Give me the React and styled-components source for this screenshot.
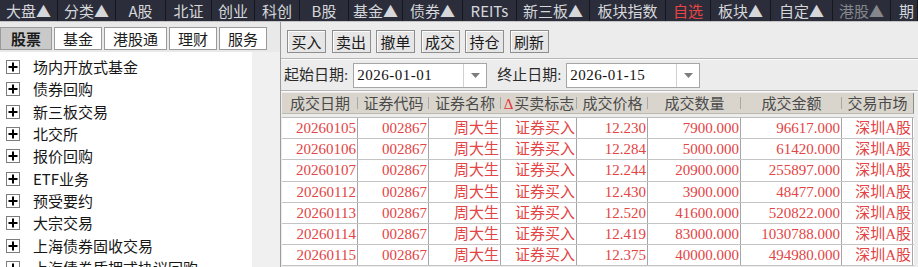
import React from 'react';
import styled, { createGlobalStyle } from 'styled-components';

const SANS = `"Noto Sans CJK SC", "Noto Sans", sans-serif`;
const SERIF = `"Liberation Serif", "Noto Sans CJK SC", serif`;

const GlobalStyle = createGlobalStyle`
  html, body { margin: 0; padding: 0; }
  body { background: #e9e9e9; font-family: ${SANS}; overflow: hidden; }
`;

const Screen = styled.div`
  width: 918px;
  height: 267px;
  display: flex;
  flex-direction: column;
  overflow: hidden;
  background: #e9e9e9;
`;

const TopBar = styled.div`
  display: flex;
  flex-shrink: 0;
  height: 21px;
  background: #2b2e3a;
  border-bottom: 1px solid #c4c4c4;
  overflow: hidden;
`;

const NavItem = styled.div`
  flex: ${p => (p.$w ? `0 0 ${p.$w}px` : '1 1 auto')};
  box-sizing: border-box;
  border-right: 1px solid #15171e;
  display: flex;
  align-items: center;
  justify-content: ${p => (p.$w ? 'center' : 'flex-start')};
  padding-left: ${p => (p.$w ? 0 : 8)}px;
  font: 15px/21px ${SANS};
  white-space: nowrap;
  color: ${p => (p.$tone === 'red' ? '#e84444' : p.$tone === 'dim' ? '#86878c' : '#d6d7da')};
`;

const Main = styled.div`
  flex: 1;
  display: flex;
  min-height: 0;
`;

const LeftPanel = styled.div`
  width: 280px;
  flex-shrink: 0;
  display: flex;
  flex-direction: column;
`;

const Tabs = styled.div`
  display: flex;
  gap: 2px;
  margin-top: 5px;
  height: 23px;
`;

const Tab = styled.div`
  box-sizing: border-box;
  height: 23px;
  padding: 0 ${p => (p.$active ? 10 : 8)}px;
  border: 1px solid #9a9a9a;
  background: ${p => (p.$active ? '#c9c9c9' : '#ffffff')};
  font: ${p => (p.$active ? 700 : 400)} 15px/21px ${SANS};
  color: #1c1c1c;
  white-space: nowrap;
`;

const TreeArea = styled.div`
  flex: 1;
  display: flex;
  margin-top: 2px;
  min-height: 0;
`;

const TreeList = styled.div`
  width: 252px;
  background: #ffffff;
  padding-top: 4px;
  overflow: hidden;
`;

const ScrollStrip = styled.div`
  flex: 1;
  background: #f0f0f0;
`;

const TreeRow = styled.div`
  height: 22.3px;
  display: flex;
  align-items: center;
  gap: 13px;
  padding-left: 6px;
`;

const TreeLabel = styled.span`
  font: 15px/20px ${SANS};
  color: #161616;
  white-space: nowrap;
`;

const RightPanel = styled.div`
  flex: 1;
  display: flex;
  flex-direction: column;
  border-left: 1px solid #9c9c9c;
  background: #ececec;
  min-width: 0;
`;

const Toolbar = styled.div`
  height: 36px;
  box-sizing: border-box;
  padding: 8px 0 0 6px;
  display: flex;
  align-items: flex-start;
  gap: 5.5px;
`;

const ToolButton = styled.div`
  width: 39px;
  height: 23px;
  box-sizing: border-box;
  border: 1px solid #8e8e8e;
  background: #e6e6e6;
  box-shadow: inset 1px 1px 0 #fdfdfd;
  font: 15px/21px ${SANS};
  color: #1a1a1a;
  text-align: center;
`;

const Etched = styled.div`
  border-top: 1px solid #b6b6b6;
  border-bottom: 1px solid #fafafa;
`;

const DateRow = styled.div`
  height: 30px;
  display: flex;
  align-items: center;
  gap: 10px;
  padding-left: 3px;
`;

const DateField = styled.div`
  display: flex;
  align-items: center;
  gap: 5px;
`;

const FieldLabel = styled.span`
  font: 15px/20px ${SERIF};
  color: #2a2a2a;
  white-space: nowrap;
`;

const Combo = styled.div`
  width: 134px;
  height: 25px;
  box-sizing: border-box;
  border: 1px solid #a6a6a6;
  background: #ffffff;
  display: flex;
`;

const ComboText = styled.div`
  flex: 1;
  padding-left: 3px;
  font: 15px/23px ${SERIF};
  letter-spacing: 0.5px;
  color: #111111;
`;

const ComboArrow = styled.div`
  width: 22px;
  border-left: 1px solid #d2d2d2;
  display: flex;
  align-items: center;
  justify-content: center;
`;

const Table = styled.div`
  margin: 1px 0 0 1px;
  width: max-content;
`;

const COLS = '76px 71px 72px 76px 71px 93px 101px 71px';

const HeaderRow = styled.div`
  display: grid;
  grid-template-columns: ${COLS};
  height: 20px;
  background: #d9d5cd;
  border-bottom: 1px solid #bdb9b1;
  border-right: 1px solid #8c8c8c;
`;

const HeaderCell = styled.div`
  position: relative;
  text-align: center;
  font: 15px/20px ${SANS};
  color: #4a4a4a;
  white-space: nowrap;
  overflow: hidden;
  &::after {
    content: '';
    display: ${p => (p.$last ? 'none' : 'block')};
    position: absolute;
    right: 0;
    top: 4px;
    bottom: 4px;
    width: 1px;
    background: #a8a8a8;
  }
`;

const SortMark = styled.span`
  font-family: ${SERIF};
  color: #e53535;
  margin-right: 1px;
`;

const Body = styled.div`
  margin-top: 3px;
  border-top: 1px solid #bdbdbd;
  background: #ffffff;
`;

const Row = styled.div`
  display: grid;
  grid-template-columns: ${COLS};
  height: 21.2px;
  box-sizing: border-box;
  border-bottom: 1px solid #c4c4c4;
`;

const Cell = styled.div`
  border-right: 1px solid #a6a6a6;
  text-align: right;
  padding-right: 1px;
  font: 15px/20px ${SERIF};
  color: #e34444;
  white-space: nowrap;
  overflow: hidden;
`;

const PlusBox = () => (
  <svg width="14" height="14" viewBox="0 0 14 14">
    <rect x="0.5" y="0.5" width="13" height="13" fill="#fff" stroke="#7c7c7c" />
    <path d="M7 2.5v9M2.5 7h9" stroke="#000" strokeWidth="2" />
  </svg>
);

const DownArrow = () => (
  <svg width="9" height="5" viewBox="0 0 9 5">
    <path d="M0 0h9L4.5 5z" fill="#7d7d7d" />
  </svg>
);

const nav = [
  { t: '大盘▲', w: 58 },
  { t: '分类▲', w: 58 },
  { t: 'A股', w: 50 },
  { t: '北证', w: 46 },
  { t: '创业', w: 43 },
  { t: '科创', w: 45 },
  { t: 'B股', w: 49 },
  { t: '基金▲', w: 54 },
  { t: '债券▲', w: 60 },
  { t: 'REITs', w: 54 },
  { t: '新三板▲', w: 73 },
  { t: '板块指数', w: 76 },
  { t: '自选', w: 45, tone: 'red' },
  { t: '板块▲', w: 60 },
  { t: '自定▲', w: 62 },
  { t: '港股▲', w: 58, tone: 'dim' },
  { t: '期' },
];

const tabs = ['股票', '基金', '港股通', '理财', '服务'];

const tree = [
  '场内开放式基金',
  '债券回购',
  '新三板交易',
  '北交所',
  '报价回购',
  'ETF业务',
  '预受要约',
  '大宗交易',
  '上海债券固收交易',
  '上海债券质押式协议回购',
];

const buttons = ['买入', '卖出', '撤单', '成交', '持仓', '刷新'];

const headers = ['成交日期', '证券代码', '证券名称', '买卖标志', '成交价格', '成交数量', '成交金额', '交易市场'];

const rows = [
  ['20260105', '12.230', '7900.000', '96617.000'],
  ['20260106', '12.284', '5000.000', '61420.000'],
  ['20260107', '12.244', '20900.000', '255897.000'],
  ['20260112', '12.430', '3900.000', '48477.000'],
  ['20260113', '12.520', '41600.000', '520822.000'],
  ['20260114', '12.419', '83000.000', '1030788.000'],
  ['20260115', '12.375', '40000.000', '494980.000'],
];

export default function App() {
  return (
    <>
      <GlobalStyle />
      <Screen>
        <TopBar>
          {nav.map((n, i) => (
            <NavItem key={i} $w={n.w} $tone={n.tone}>
              {n.t}
            </NavItem>
          ))}
        </TopBar>
        <Main>
          <LeftPanel>
            <Tabs>
              {tabs.map((t, i) => (
                <Tab key={t} $active={i === 0}>
                  {t}
                </Tab>
              ))}
            </Tabs>
            <TreeArea>
              <TreeList>
                {tree.map(t => (
                  <TreeRow key={t}>
                    <PlusBox />
                    <TreeLabel>{t}</TreeLabel>
                  </TreeRow>
                ))}
              </TreeList>
              <ScrollStrip />
            </TreeArea>
          </LeftPanel>
          <RightPanel>
            <Toolbar>
              {buttons.map(b => (
                <ToolButton key={b}>{b}</ToolButton>
              ))}
            </Toolbar>
            <Etched />
            <DateRow>
              <DateField>
                <FieldLabel>起始日期:</FieldLabel>
                <Combo>
                  <ComboText>2026-01-01</ComboText>
                  <ComboArrow>
                    <DownArrow />
                  </ComboArrow>
                </Combo>
              </DateField>
              <DateField>
                <FieldLabel>终止日期:</FieldLabel>
                <Combo>
                  <ComboText>2026-01-15</ComboText>
                  <ComboArrow>
                    <DownArrow />
                  </ComboArrow>
                </Combo>
              </DateField>
            </DateRow>
            <Etched />
            <Table>
              <HeaderRow>
                {headers.map((h, i) => (
                  <HeaderCell key={h} $last={i === headers.length - 1}>
                    {i === 3 && <SortMark>Δ</SortMark>}
                    {h}
                  </HeaderCell>
                ))}
              </HeaderRow>
              <Body>
                {rows.map(r => (
                  <Row key={r[0]}>
                    <Cell>{r[0]}</Cell>
                    <Cell>002867</Cell>
                    <Cell>周大生</Cell>
                    <Cell>证券买入</Cell>
                    <Cell>{r[1]}</Cell>
                    <Cell>{r[2]}</Cell>
                    <Cell>{r[3]}</Cell>
                    <Cell>深圳A股</Cell>
                  </Row>
                ))}
              </Body>
            </Table>
          </RightPanel>
        </Main>
      </Screen>
    </>
  );
}
